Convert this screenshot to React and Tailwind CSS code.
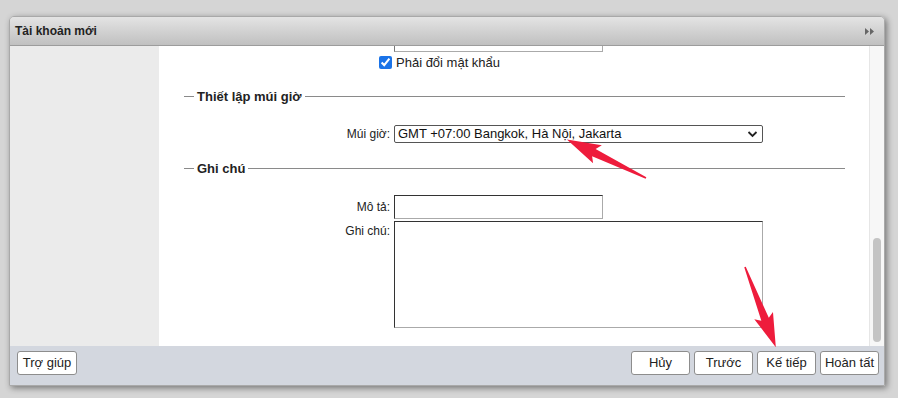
import React from "react";

const font = { fontFamily: '"Liberation Sans", Arial, sans-serif' };

const Legend = ({ children }) => (
  <div className="flex items-center h-[16px]">
    <div className="w-[10px] h-px bg-[#8a8a8a]" />
    <span className="px-[3px] text-[13px] font-bold text-[#222]">{children}</span>
    <div className="flex-1 h-px bg-[#8a8a8a]" />
  </div>
);

const Button = ({ children, className = "" }) => (
  <button className={`h-[24px] border border-[#8d8d8d] rounded-[3px] bg-white text-[13px] text-[#222] ${className}`}>
    {children}
  </button>
);

const Arrow = ({ x, y, len, angle }) => {
  const h = 30;
  return (
    <g transform={`translate(${x} ${y}) rotate(${angle})`}>
      <polygon
        points={`0,-0.8 ${len - h},-4 ${len - h - 4},-10 ${len},0 ${len - h - 4},10 ${len - h},4 0,0.8`}
        fill="#ee1c3c"
      />
    </g>
  );
};

export default function App() {
  return (
    <div className="relative w-[898px] h-[398px] bg-[#d5d5d5] pt-[16px] pl-[9px]" style={font}>
      <div className="w-[876px] h-[370px] flex flex-col rounded-t-[5px] overflow-hidden shadow-[2px_2px_6px_rgba(0,0,0,0.45)] border border-[#a9a9a9]">
        {/* Title bar */}
        <div className="h-[29px] flex items-center justify-between px-[5px] bg-gradient-to-b from-[#e4e4e4] to-[#c0c0c0] border-b border-[#9c9c9c]">
          <span className="text-[12px] font-bold text-[#222]">Tài khoản mới</span>
          <svg width="10" height="7" viewBox="0 0 10 7" className="mr-[4px]">
            <path d="M0 0 L4 3.5 L0 7 Z M5 0 L9 3.5 L5 7 Z" fill="#666" />
          </svg>
        </div>

        {/* Body */}
        <div className="flex h-[300px]">
          <div className="w-[149px] bg-[#ebebeb]" />
          <div className="flex-1 bg-white overflow-hidden pl-[25px] pr-[24px]">
            <div className="mt-[-17px] flex flex-col">
              {/* partial password row */}
              <div className="flex gap-[4px]">
                <div className="w-[206px]" />
                <div className="w-[209px] h-[23px] border border-[#767676] border-r-[#aaa] border-b-[#aaa]" />
              </div>
              <div className="flex items-center gap-[4px] mt-[1px]">
                <div className="w-[191px]" />
                <input type="checkbox" defaultChecked className="w-[13px] h-[13px] accent-[#1a73e8] m-0" />
                <span className="text-[13px] text-[#222]">Phải đổi mật khẩu</span>
              </div>

              <div className="mt-[16px]">
                <Legend>Thiết lập múi giờ</Legend>
              </div>
              <div className="flex items-center gap-[4px] mt-[20px]">
                <div className="w-[206px] text-right text-[12px] text-[#222]">Múi giờ:</div>
                <div className="w-[369px] h-[18px] border border-[#555] rounded-[2px] flex items-center justify-between pl-[3px] pr-[4px]">
                  <span className="text-[13px] text-[#111] leading-none">GMT +07:00 Bangkok, Hà Nội, Jakarta</span>
                  <svg width="11" height="8" viewBox="0 0 11 8">
                    <path d="M1.5 2 L5.5 6 L9.5 2" fill="none" stroke="#222" strokeWidth="1.8" />
                  </svg>
                </div>
              </div>

              <div className="mt-[18px]">
                <Legend>Ghi chú</Legend>
              </div>
              <div className="flex items-center gap-[4px] mt-[18px]">
                <div className="w-[206px] text-right text-[12px] text-[#222]">Mô tả:</div>
                <div className="w-[209px] h-[24px] border border-[#333] border-r-[#aaa] border-b-[#aaa]" />
              </div>
              <div className="flex items-start gap-[4px] mt-[2px]">
                <div className="w-[206px] text-right text-[12px] text-[#222] pt-[1px]">Ghi chú:</div>
                <div className="w-[369px] h-[107px] border border-[#333] border-r-[#aaa] border-b-[#aaa]" />
              </div>
            </div>
          </div>
          <div className="w-[15px] bg-[#f7f7f7] border-l border-[#e6e6e6] flex flex-col items-center pt-[192px]">
            <div className="w-[8px] h-[104px] rounded-full bg-[#c4c4c4]" />
          </div>
        </div>

        {/* Footer */}
        <div className="flex-1 bg-[#d3d7df] flex items-start justify-between pl-[7px] pr-[5px] pt-[5px]">
          <Button className="w-[60px]">Trợ giúp</Button>
          <div className="flex gap-[4px]">
            <Button className="w-[59px]">Hủy</Button>
            <Button className="w-[59px]">Trước</Button>
            <Button className="w-[59px]">Kế tiếp</Button>
            <Button className="w-[59px]">Hoàn tất</Button>
          </div>
        </div>
      </div>

      {/* annotation arrows */}
      <svg className="absolute inset-0 pointer-events-none" width="898" height="398">
        <Arrow x={646} y={178} len={88} angle={206} />
        <Arrow x={745} y={267} len={86} angle={69} />
      </svg>
    </div>
  );
}
